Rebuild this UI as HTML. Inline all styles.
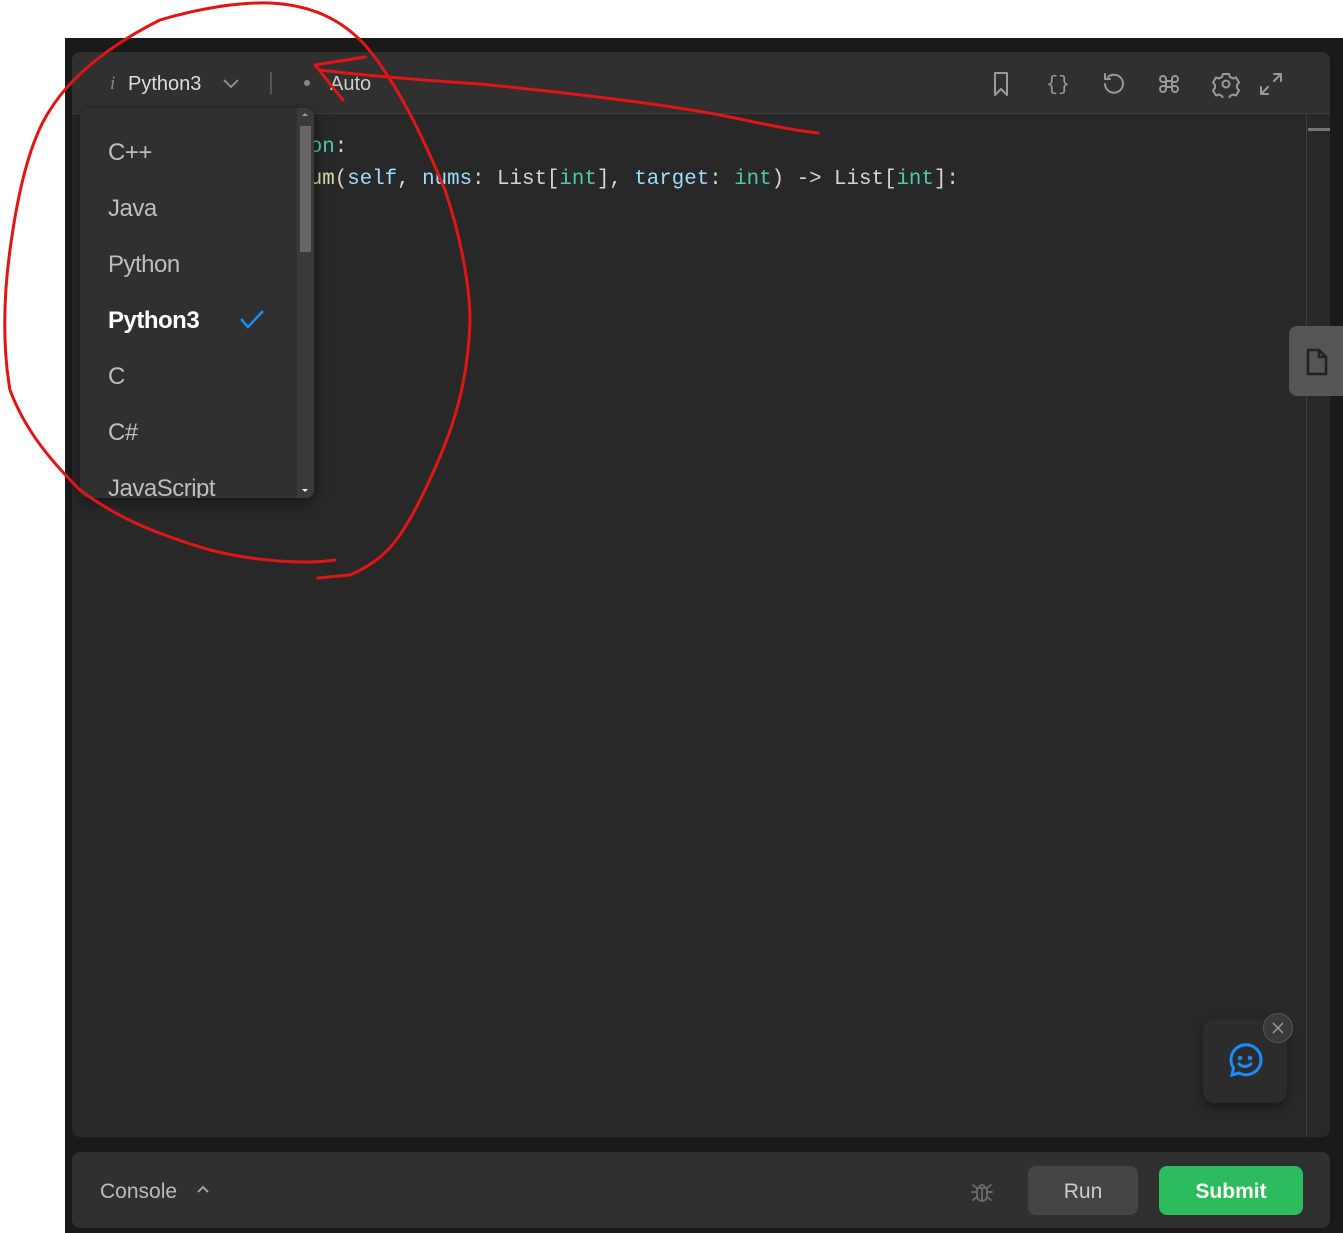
<!DOCTYPE html>
<html><head><meta charset="utf-8"><style>
*{margin:0;padding:0;box-sizing:border-box}
body{width:1343px;height:1233px;background:#fff;position:relative;overflow:hidden;font-family:"Liberation Sans",sans-serif}
.dark{position:absolute;left:65px;top:38px;right:0;bottom:0;background:#1a1a1a}
.ed{position:absolute;left:72px;top:52px;width:1258px;height:1085px;background:#282828;border-radius:8px;overflow:hidden}
.hd{position:absolute;left:0;top:0;right:0;height:62px;background:#303030;border-bottom:1px solid #3c3c3c}
.t{position:absolute;color:#d8d8d8}
.code{position:absolute;font-family:"Liberation Mono",monospace;font-size:20.8px;color:#d4d4d4;white-space:pre;left:88px}
.dd{position:absolute;left:80px;top:108px;width:234px;height:390px;background:#303030;border-radius:8px;box-shadow:0 4px 14px rgba(0,0,0,.5);overflow:hidden}
.dd .i{position:absolute;left:28px;font-size:24px;color:#bdbdbd;letter-spacing:-0.5px}
.sb{position:absolute;right:0;top:0;width:17px;height:100%;background:#3a3a3a}
.con{position:absolute;left:72px;top:1152px;width:1258px;height:76px;background:#303030;border-radius:8px}
svg{position:absolute}
</style></head><body>
<div class="dark"></div>
<div class="ed">
 <div class="hd">
  <span class="t" style="left:38px;top:21px;font-family:'Liberation Serif',serif;font-style:italic;color:#888;font-size:19px">i</span>
  <span class="t" style="left:56px;top:21px;font-size:20px;color:#dcdcdc">Python3</span>
  <svg style="left:150px;top:25px" width="18" height="12" viewBox="0 0 18 12"><path d="M2 3l7 7 7-7" stroke="#999" stroke-width="1.6" fill="none"/></svg>
  <div style="position:absolute;left:198px;top:20px;width:2px;height:22px;background:#555"></div>
  <div style="position:absolute;left:232px;top:28px;width:6px;height:6px;border-radius:50%;background:#888"></div>
  <span class="t" style="left:258px;top:21px;font-size:20px;color:#ccc">Auto</span>
  <svg style="left:910px;top:18px" width="300" height="28" viewBox="0 0 300 28" fill="none" stroke="#999" stroke-width="2" stroke-linecap="round" stroke-linejoin="round">
   <path d="M13 3h12v22l-6-6-6 6z"/>
   <text x="64" y="20" fill="#999" stroke="none" font-size="20" font-family="Liberation Mono">{}</text>
   <path d="M126 7a9 9 0 1 1-3 7M123 4v5h5"/>
   <path d="M184 11h6v6h-6zM184 11v-2a3 3 0 1 0-3 3h3M190 11v-2a3 3 0 1 1 3 3h-3M184 17v2a3 3 0 1 1-3-3h3M190 17v2a3 3 0 1 0 3-3h-3"/>
   <circle cx="244" cy="14" r="3.5"/><path d="M241 4h6l1 3 3 1.5 3-1 3 5-2 2.5v3l2 2.5-3 5-3-1-3 1.5-1 3h-6l-1-3-3-1.5-3 1-3-5 2-2.5v-3l-2-2.5 3-5 3 1 3-1.5z"/>
   <path d="M292 4h7v7M299 4l-7 7M286 24h-7v-7M279 24l7-7"/>
  </svg>
 </div>
 <div class="code" style="top:84px"><span>class Soluti</span><span style="color:#4ec9b0">on</span>:</div>
 <div class="code" style="top:116px">    <span style="color:#569cd6">def</span> <span style="color:#dcdcaa">twoSum</span>(<span style="color:#9cdcfe">self</span>, <span style="color:#9cdcfe">nums</span>: List[<span style="color:#4ec9b0">int</span>], <span style="color:#9cdcfe">target</span>: <span style="color:#4ec9b0">int</span>) -&gt; List[<span style="color:#4ec9b0">int</span>]:</div>
 <div style="position:absolute;left:1234px;top:62px;width:1px;height:1030px;background:#3e3e3e"></div>
 <div style="position:absolute;left:1236px;top:76px;width:22px;height:3px;background:#777"></div>
 <div style="position:absolute;left:1131px;top:967px;width:84px;height:84px;background:#2c2c2c;border-radius:12px;box-shadow:0 4px 10px rgba(0,0,0,.4)"></div>
 <svg style="left:1154px;top:990px" width="38" height="38" viewBox="0 0 38 38" fill="none" stroke="#1a8cff" stroke-width="3" stroke-linecap="round"><path d="M6 33l1.5-7A15 15 0 1 1 13 31z"/><circle cx="14" cy="16" r=".8" fill="#1a8cff"/><circle cx="24" cy="16" r=".8" fill="#1a8cff"/><path d="M13 22q6 5 12 0"/></svg>
 <div style="position:absolute;left:1191px;top:961px;width:30px;height:30px;border-radius:50%;background:#3a3a3a;border:1px solid #555"></div>
 <svg style="left:1199px;top:969px" width="14" height="14" viewBox="0 0 14 14"><path d="M2 2l10 10M12 2L2 12" stroke="#999" stroke-width="1.5"/></svg>
</div>
<div style="position:absolute;left:1289px;top:326px;width:60px;height:70px;background:#555;border-radius:8px"></div>
<svg style="left:1305px;top:347px" width="24" height="30" viewBox="0 0 24 30" fill="none" stroke="#222" stroke-width="2.6" stroke-linejoin="round"><path d="M3 3h11l7 7v17H3zM14 3v7h7"/></svg>
<div class="dd">
 <span class="i" style="top:31px">C++</span>
 <span class="i" style="top:87px">Java</span>
 <span class="i" style="top:143px">Python</span>
 <span class="i" style="top:199px;color:#fff;font-weight:bold">Python3</span>
 <svg style="left:158px;top:200px" width="28" height="22" viewBox="0 0 28 22"><path d="M3 11l7 8L25 3" stroke="#1a8cff" stroke-width="2.5" fill="none"/></svg>
 <span class="i" style="top:255px">C</span>
 <span class="i" style="top:311px">C#</span>
 <span class="i" style="top:367px">JavaScript</span>
 <div class="sb"><div style="position:absolute;left:3px;top:18px;width:11px;height:126px;background:#666"></div>
 <div style="position:absolute;left:5px;top:5px;border:3px solid transparent;border-bottom-color:#999;border-top:0"></div>
 <div style="position:absolute;left:5px;bottom:6px;border:3px solid transparent;border-top-color:#eee;border-bottom:0"></div></div>
</div>
<div class="con">
 <span class="t" style="left:28px;top:28px;font-size:21px;color:#bbb">Console</span>
 <svg style="left:124px;top:32px" width="14" height="10" viewBox="0 0 14 10"><path d="M2 8l5-5 5 5" stroke="#aaa" stroke-width="1.8" fill="none"/></svg>
 <svg style="left:896px;top:26px" width="28" height="28" viewBox="0 0 28 28" fill="none" stroke="#666" stroke-width="2" stroke-linecap="round"><path d="M9 10h10v8a5 5 0 0 1-10 0zM11 10a3 3 0 0 1 6 0M14 10v13M9 14H4M19 14h5M9 19l-4 3M19 19l4 3M9 10l-4-3M19 10l4-3"/></svg>
 <div style="position:absolute;left:956px;top:14px;width:110px;height:49px;background:#454545;border-radius:8px;color:#ccc;font-size:21px;text-align:center;line-height:51px">Run</div>
 <div style="position:absolute;left:1087px;top:14px;width:144px;height:49px;background:#2cbb5d;border-radius:8px;color:#fff;font-size:21px;font-weight:bold;text-align:center;line-height:51px">Submit</div>
</div>
<svg style="left:0;top:0" width="1343" height="1233" viewBox="0 0 1343 1233" fill="none" stroke="#e01515" stroke-width="3" stroke-linecap="round" stroke-linejoin="round">
 <path d="M335 560C300 565 250 560 210 550C160 535 120 520 80 490C50 460 25 430 10 390C3 350 3 300 10 250C18 190 30 140 50 110C75 70 120 40 160 20C200 8 240 2 270 3C310 5 340 18 365 45C395 80 420 130 445 190C462 240 470 290 470 320C468 390 450 440 420 500C400 540 385 560 350 575L318 578"/>
 <path d="M343 100L315 65L365 57M320 70C360 75 420 80 480 84C560 92 650 102 720 115C760 123 790 130 818 133"/>
</svg>
</body></html>
